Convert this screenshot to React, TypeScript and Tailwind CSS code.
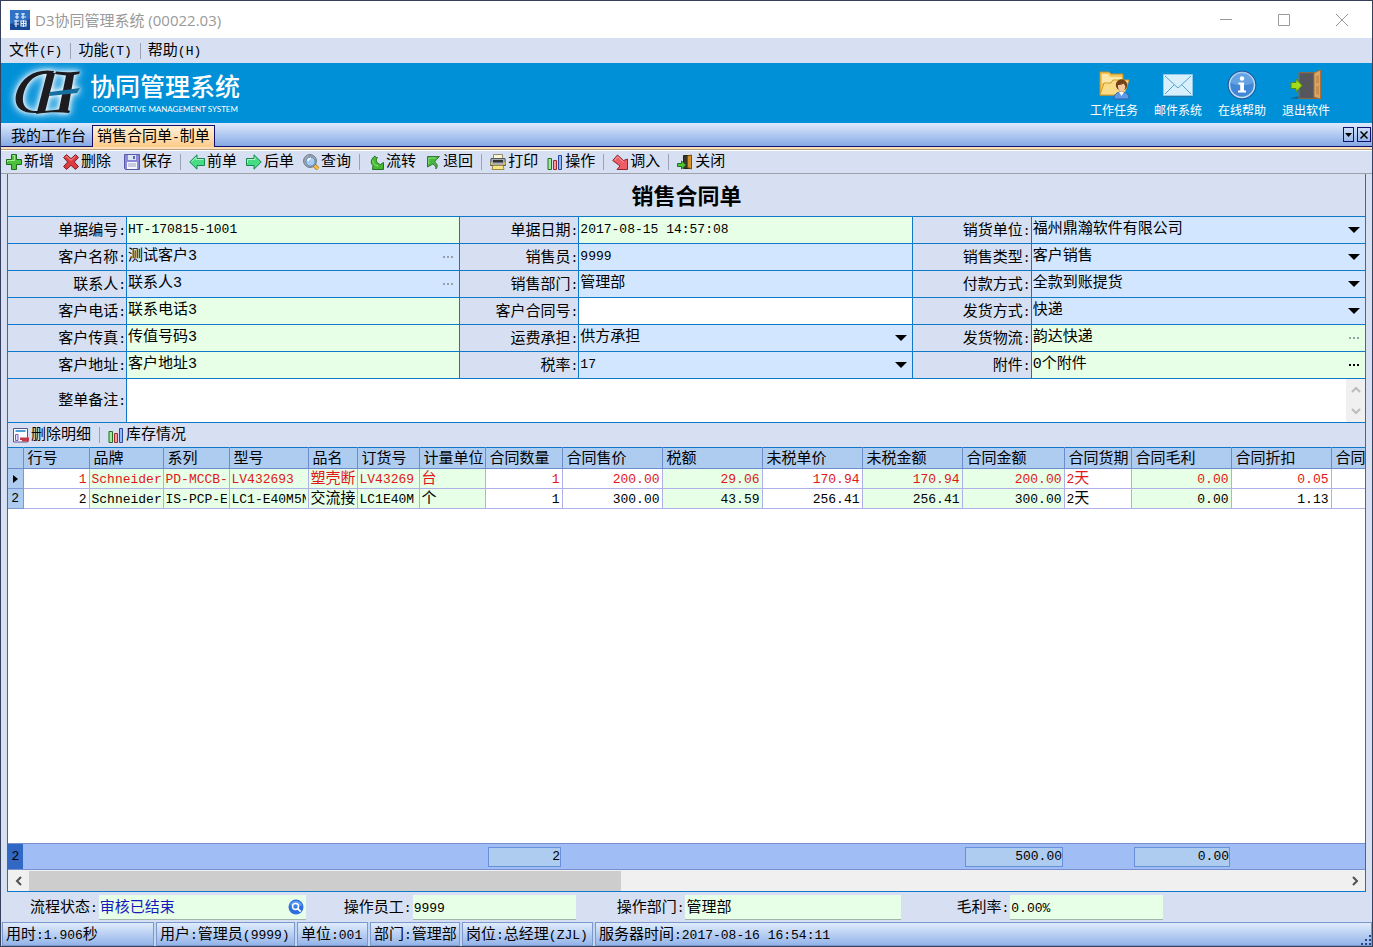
import React from 'react';

const FONT = "font-['Liberation_Mono','Noto_Sans_CJK_SC',monospace]";

/* Mixed text: half-width runs are set smaller so they keep about half the width of a Chinese character. */
function Mixed({ children }: { children: string }) {
  return (
    <>
      {children.split(/([\x20-\x7e]+)/).map((part, i) =>
        i % 2 ? (
          <span key={i} className="whitespace-pre text-[13px]">{part}</span>
        ) : (
          part
        ),
      )}
    </>
  );
}

/* ---------- icons ---------- */

const svg16 = { width: 16, height: 16, viewBox: '0 0 16 16', 'aria-hidden': true, className: 'shrink-0' } as const;

const AddIcon = () => (
  <svg {...svg16}>
    <path d="M5.5 0.5h5v5h5v5h-5v5h-5v-5h-5v-5h5z" fill="#4cc23c" stroke="#1d6b1d" />
    <path d="M6.5 1.5h2v5h-7v1.500" fill="none" stroke="#a5ee94" />
  </svg>
);
const DeleteIcon = () => (
  <svg {...svg16}>
    <path d="M3.500 .6L8 4.700 12.500 .6 15.400 3.500 11.300 8l4.100 4.500-2.900 2.900L8 11.300l-4.500 4.100L.6 12.500 4.700 8 .6 3.500z" fill="#dc3c41" stroke="#7c1a1f" />
    <path d="M2.200 3.600l1.400-1.400L8 6.300l4.400-4.100" fill="none" stroke="#f59a98" />
  </svg>
);
const SaveIcon = () => (
  <svg {...svg16}>
    <path d="M.5.5h15v15H1.500l-1-1z" fill="#8c8ad6" stroke="#5a58a8" />
    <path d="M4 1h8v5H4z" fill="#d8e6f4" />
    <path d="M9 2h2v3H9z" fill="#6462b4" />
    <path d="M3 8h10v7H3z" fill="#f4f6fb" />
    <path d="M4 10h8M4 12h8" stroke="#a0a0c4" />
  </svg>
);
const PrevIcon = () => (
  <svg {...svg16}>
    <path d="M.7 8L8 .8V4.500h7.500v7H8v3.700z" fill="#45dc84" stroke="#1a8550" />
    <path d="M2.500 7.800L7 3.300V5.500h7.500" fill="none" stroke="#aef5c6" />
  </svg>
);
const NextIcon = () => (
  <svg {...svg16}>
    <path d="M15.300 8L8 .8V4.500H.5v7H8v3.700z" fill="#45dc84" stroke="#1a8550" />
    <path d="M1.500 9V5.500H9V3.300" fill="none" stroke="#aef5c6" />
  </svg>
);
const SearchIcon = () => (
  <svg {...svg16}>
    <path d="M11 11l4 4" stroke="#a86e20" strokeWidth="4" />
    <path d="M11 11l4 4" stroke="#f8c23c" strokeWidth="2.500" />
    <circle cx="7" cy="7" r="6.400" fill="#a8adb6" stroke="#6b7078" />
    <circle cx="7.500" cy="7.500" r="4.600" fill="#a6cdf2" stroke="#5b86b4" />
    <path d="M4.800 7a3 3 0 013-2.500" fill="none" stroke="#fff" strokeWidth="1.400" />
  </svg>
);
const ForwardIcon = () => (
  <svg {...svg16}>
    <path d="M7 2C3 4.500 2 9 5 11.500L4.500 15.500h11V8.500l-3 2C9 9.500 7 6.500 9.500 3.500 8 4 7.500 3 7 2z" fill="#46b834" stroke="#247020" />
    <path d="M5 6.500c-.5 2.500 1.500 5 5.200 5.500" fill="none" stroke="#9be88a" />
  </svg>
);
const BackIcon = () => (
  <svg {...svg16}>
    <path d="M2.500 2.500h12L11.500 5.500 9.500 8c3 1.500 3.500 4.500 1.500 7-.2-2.500-1-4-3.200-5L2.500 13z" fill="#48b83a" stroke="#38743a" />
    <path d="M3.800 10V4h7" fill="none" stroke="#93dd86" />
  </svg>
);
const PrintIcon = () => (
  <svg {...svg16}>
    <path d="M3.500.5h9v4h-9z" fill="#fdf6d0" stroke="#8e8a70" />
    <path d="M1 4.500h14l.5 7H.5z" fill="#a9adb2" stroke="#54585e" />
    <path d="M3 6h10v2.500H3z" fill="#2e3238" />
    <path d="M3 11.500h10l1 4H2z" fill="#f8e488" stroke="#9c8838" />
    <path d="M.5 9.500h2M13.500 9.500h2" stroke="#f0c830" strokeWidth="2" />
  </svg>
);
const BarsIcon = () => (
  <svg {...svg16}>
    <path d="M1 4.500h3.500v11H1z" fill="#9fe89c" stroke="#246b24" />
    <path d="M6.500 6.500h3v9h-3z" fill="#f89a9c" stroke="#a02830" />
    <path d="M11.500 1.500h3v14h-3z" fill="#94baf8" stroke="#2848a0" />
  </svg>
);
const ImportIcon = () => (
  <svg {...svg16}>
    <path d="M5.500 1l6 5.500L15.500 5v10.500H5L8 12 .7 6.500z" fill="#ee5c64" stroke="#8c2830" />
    <path d="M2.500 6.200l3.200-3.400L11.500 8" fill="none" stroke="#f8a8a8" />
  </svg>
);
const ExitIcon = () => (
  <svg {...svg16}>
    <path d="M6.500 1.500h8v13h-8z" fill="#3a3428" stroke="#28241c" />
    <path d="M10.500 2l4-1v14l-4-1.500z" fill="#d8942c" stroke="#7e5010" />
    <path d="M.5 9.500h4v-2.500l4.500 4-4.500 4v-2.500h-4z" fill="#4cc83c" stroke="#1f741c" />
  </svg>
);
const RemoveRowIcon = () => (
  <svg {...svg16}>
    <path d="M.5 1.500h14v13.500H.5z" fill="#fdfdff" stroke="#56528c" />
    <path d="M2.500 4h10" stroke="#4ca0d4" strokeWidth="2" />
    <path d="M2.500 7.500h2.500v6H2.500z" fill="#e4e0ff" stroke="#7a5cc0" />
    <path d="M7 10.500h9v4H9v-1.500H7z" fill="#c23c48" />
  </svg>
);

const svg30 = { width: 32, height: 32, viewBox: '0 0 32 32', 'aria-hidden': true } as const;

const TaskIcon = () => (
  <svg {...svg30}>
    <path d="M2 3h9l2 2h12v21H2z" fill="#f3c55a" stroke="#c98f1e" />
    <path d="M4 5h6l2 3h12v6H4z" fill="#fbe7a8" />
    <path d="M2 26l4-12h7l2-3h16l-5 15z" fill="#fbdc86" stroke="#d19a2a" />
    <path d="M16 30c0-5 3-7 7.500-7s7.500 2 7.500 7z" fill="#5e9be6" stroke="#2c62ae" />
    <path d="M21 23l2.500 4 2.500-4z" fill="#fff" />
    <circle cx="23.500" cy="16" r="5.700" fill="#744018" />
    <path d="M20 16c2 0 4-.5 5.500-1.500l1.800 2.500c0 3-1.500 5.500-3.600 5.500s-3.700-2.500-3.700-5z" fill="#f6c9a0" />
  </svg>
);
const MailIcon = () => (
  <svg {...svg30}>
    <path d="M1.500 5.500h29v21h-29z" fill="#d8f0fc" stroke="#8fc8e8" />
    <path d="M2 27.500h28" stroke="#2b74a6" />
    <path d="M3 7l13 12L29 7M3 25l9-9M29 25l-9-9" fill="none" stroke="#5aa0c8" />
  </svg>
);
const InfoIcon = () => (
  <svg {...svg30}>
    <circle cx="16" cy="16" r="14" fill="#2a6cc0" stroke="#235794" />
    <circle cx="16" cy="16" r="12.500" fill="#4287d6" stroke="#c4e0f8" strokeWidth="1.500" />
    <path d="M5 14a11 11 0 0122 0c-6 3-16 3-22 0z" fill="#7db4ea" opacity=".6" />
    <circle cx="16" cy="9.500" r="2.200" fill="#fff" />
    <path d="M12.500 13.500h5.500v8h2v2h-8v-2h2.200v-6h-1.700z" fill="#fff" />
  </svg>
);
const DoorIcon = () => (
  <svg {...svg30}>
    <path d="M1 29l8-2h20v3H1z" fill="#0a6ba4" />
    <path d="M9 3.500h18v26H9z" fill="#5c5c60" stroke="#8a6a40" />
    <path d="M10 5h13v24H10z" fill="#55575c" />
    <path d="M24 4l6.500-3v29L24 28z" fill="#d9a868" stroke="#a87038" />
    <path d="M26 7l3-1v8l-3 .5zM26 17l3-.5V26l-3-1z" fill="#c89050" />
    <path d="M1 13.500h5v-3.500L12 16.500 6 23v-3.500H1z" fill="#a4dc1c" stroke="#548c0c" />
  </svg>
);

const Logo = () => (
  <svg width="84" height="56" viewBox="4 65 84 56" aria-hidden="true" className="[filter:drop-shadow(0_0_2px_white)_drop-shadow(0_0_4px_white)]">
    <path d="M54 71C36 68 22 77 17 91c-5 15 3 23 21 22l1-2C27 112 20 106 24 92c4-13 14-20 29-18z" fill="#1c1c20" />
    <path d="M47 73h8L45 112h-8z" fill="#1c1c20" />
    <path d="M56 71.500c8 1 15 1 24 0l-1 2.500-5 1-6 35 2 1-1 2c-11-1-21-1-33 1l1-2.500c10-1 17-1 22-2l7-34-11-1.500z" fill="#1c1c20" />
    <path d="M50 92l30-4-3 5c-8 1-18 2-28 3z" fill="#156f9f" />
  </svg>
);

const Chevron = ({ d }: { d: string }) => (
  <svg width="10" height="10" viewBox="0 0 10 10" aria-hidden="true">
    <path d={d} fill="none" stroke="currentColor" strokeWidth="2" />
  </svg>
);

/* ---------- data ---------- */

type Tool = [string, () => React.JSX.Element];

const toolGroups: Tool[][] = [
  [['保存', SaveIcon]],
  [['前单', PrevIcon], ['后单', NextIcon], ['查询', SearchIcon]],
  [['流转', ForwardIcon], ['退回', BackIcon]],
  [['打印', PrintIcon], ['操作', BarsIcon]],
  [['调入', ImportIcon]],
  [['关闭', ExitIcon]],
];

const shortcuts: Tool[] = [
  ['工作任务', TaskIcon],
  ['邮件系统', MailIcon],
  ['在线帮助', InfoIcon],
  ['退出软件', DoorIcon],
];

type Field = { label: string; value: string; tone: 'green' | 'blue' | 'white'; kind?: 'select' | 'lookup'; active?: boolean };

const fieldColumns: Field[][] = [
  [
    { label: '单据编号', value: 'HT-170815-1001', tone: 'green' },
    { label: '客户名称', value: '测试客户3', tone: 'blue', kind: 'lookup' },
    { label: '联系人', value: '联系人3', tone: 'blue', kind: 'lookup' },
    { label: '客户电话', value: '联系电话3', tone: 'green' },
    { label: '客户传真', value: '传值号码3', tone: 'green' },
    { label: '客户地址', value: '客户地址3', tone: 'green' },
  ],
  [
    { label: '单据日期', value: '2017-08-15 14:57:08', tone: 'green' },
    { label: '销售员', value: '9999', tone: 'blue' },
    { label: '销售部门', value: '管理部', tone: 'blue' },
    { label: '客户合同号', value: '', tone: 'white' },
    { label: '运费承担', value: '供方承担', tone: 'blue', kind: 'select' },
    { label: '税率', value: '17', tone: 'blue', kind: 'select' },
  ],
  [
    { label: '销货单位', value: '福州鼎瀚软件有限公司', tone: 'blue', kind: 'select' },
    { label: '销售类型', value: '客户销售', tone: 'blue', kind: 'select' },
    { label: '付款方式', value: '全款到账提货', tone: 'blue', kind: 'select' },
    { label: '发货方式', value: '快递', tone: 'blue', kind: 'select' },
    { label: '发货物流', value: '韵达快递', tone: 'green', kind: 'lookup' },
    { label: '附件', value: '0个附件', tone: 'green', kind: 'lookup', active: true },
  ],
];

const tones = { green: 'bg-[#e6ffe6]', blue: 'bg-[#d2e6ff]', white: 'bg-white' };

type Column = { name: string; col: string; green?: boolean; right?: boolean; sum?: string };

const columns: Column[] = [
  { name: '行号', col: 'w-[66px]', right: true },
  { name: '品牌', col: 'w-[74px]', green: true },
  { name: '系列', col: 'w-[66px]', green: true },
  { name: '型号', col: 'w-[79px]', green: true },
  { name: '品名', col: 'w-[49px]', green: true },
  { name: '订货号', col: 'w-[62px]', green: true },
  { name: '计量单位', col: 'w-[66px]', green: true },
  { name: '合同数量', col: 'w-[77px]', right: true, sum: '2' },
  { name: '合同售价', col: 'w-[100px]', right: true },
  { name: '税额', col: 'w-[100px]', right: true, green: true },
  { name: '未税单价', col: 'w-[100px]', right: true },
  { name: '未税金额', col: 'w-[100px]', right: true, green: true },
  { name: '合同金额', col: 'w-[102px]', right: true, green: true, sum: '500.00' },
  { name: '合同货期', col: 'w-[67px]' },
  { name: '合同毛利', col: 'w-[100px]', right: true, green: true, sum: '0.00' },
  { name: '合同折扣', col: 'w-[100px]', right: true },
  { name: '合同', col: '' },
];

const rows = [
  ['1', 'Schneider', 'PD-MCCB-', 'LV432693', '塑壳断', 'LV43269', '台', '1', '200.00', '29.06', '170.94', '170.94', '200.00', '2天', '0.00', '0.05', ''],
  ['2', 'Schneider', 'IS-PCP-E', 'LC1-E40M5N', '交流接', 'LC1E40M', '个', '1', '300.00', '43.59', '256.41', '256.41', '300.00', '2天', '0.00', '1.13', ''],
];

const statusCells: [string, string][] = [
  ['用时:1.906秒', 'w-[152px]'],
  ['用户:管理员(9999)', 'w-[139px]'],
  ['单位:001', 'w-[71px]'],
  ['部门:管理部', 'w-[90px]'],
  ['岗位:总经理(ZJL)', 'w-[131px]'],
  ['服务器时间:2017-08-16 16:54:11', 'flex-1'],
];

/* ---------- parts ---------- */

function ToolButton({ tool: [name, Icon] }: { tool: Tool }) {
  return (
    <button type="button" className="flex shrink-0 items-center gap-0.5 whitespace-nowrap">
      <Icon />
      <span className="pt-0.5">{name}</span>
    </button>
  );
}

const Divider = () => <span className="mx-2 h-4 w-px shrink-0 bg-[#9aa3b4]" />;

function FieldRow({ field, id }: { field: Field; id: string }) {
  const { label, value, tone, kind, active } = field;
  const size = /[^\x20-\x7e]/.test(value) ? 'text-[15px]' : 'text-[13px]';
  return (
    <div className="flex h-[27px] border-b border-[#0f78c8]">
      <label htmlFor={id} className="flex w-[119px] shrink-0 items-center justify-end border-r border-[#0f78c8] pt-[3px]">
        <Mixed>{label + ':'}</Mixed>
      </label>
      <div className={`relative flex min-w-0 flex-1 ${tones[tone]}`}>
        {kind === 'select' ? (
          <>
            <select id={id} defaultValue={value} className={`min-w-0 flex-1 appearance-none bg-transparent pl-px outline-none ${size}`}>
              <option>{value}</option>
            </select>
            <svg width="12" height="6" viewBox="0 0 12 6" aria-hidden="true" className="pointer-events-none absolute right-[5px] top-[10px]">
              <path d="M0 0h12L6 6z" fill="#000" />
            </svg>
          </>
        ) : (
          <input id={id} defaultValue={value} className={`min-w-0 flex-1 bg-transparent pl-px outline-none ${size}`} />
        )}
        {kind === 'lookup' && (
          <button type="button" aria-label={`选择${label}`} className={`flex w-[22px] items-center justify-center ${active ? 'text-black' : 'text-[#98a0ac]'}`}>
            <svg width="12" height="2" viewBox="0 0 12 2" aria-hidden="true">
              <path d="M1 0h2v2H1zM5 0h2v2H5zM9 0h2v2H9z" fill="currentColor" />
            </svg>
          </button>
        )}
      </div>
    </div>
  );
}

function ColumnWidths() {
  return (
    <colgroup>
      <col className="w-[15px]" />
      {columns.map((c) => (
        <col key={c.name} className={c.col} />
      ))}
    </colgroup>
  );
}

function BottomField({ id, label, value, width, icon, className = '' }: { id: string; label: string; value: string; width: string; icon?: boolean; className?: string }) {
  const size = /[^\x20-\x7e]/.test(value) ? 'text-[15px]' : 'text-[13px]';
  return (
    <div className="flex items-center gap-px">
      <label htmlFor={id} className="whitespace-nowrap pt-[3px]"><Mixed>{label + ':'}</Mixed></label>
      <div className={`flex h-[25px] items-center border-b border-[#a3b4ac] bg-[#e6ffe6] ${width}`}>
        <input id={id} defaultValue={value} className={`min-w-0 flex-1 bg-transparent pl-px pt-[3px] outline-none ${size} ${className}`} />
        {icon && (
          <button type="button" aria-label="查看流程" className="mr-0.5">
            <svg width="16" height="16" viewBox="0 0 16 16" aria-hidden="true">
              <circle cx="8" cy="8" r="7.500" fill="#2d6fe0" />
              <path d="M2 6a6.500 6.500 0 0112 0c-3 2-9 2-12 0z" fill="#7db0f6" opacity=".7" />
              <circle cx="7.500" cy="7.500" r="3" fill="#3d80ec" stroke="#fff" strokeWidth="1.500" />
              <path d="M9.700 9.700l3 3" stroke="#fff" strokeWidth="1.800" />
            </svg>
          </button>
        )}
      </div>
    </div>
  );
}

export default function App() {
  return (
    <div className={`flex min-h-screen flex-col border border-[#34405c] bg-[#d6e0f2] text-[15px] leading-5 text-black ${FONT}`}>
      <header className="flex h-[37px] shrink-0 items-center bg-white pl-[9px] font-['Open_Sans','Noto_Sans_CJK_SC',sans-serif] text-[#999]">
        <svg width="20" height="20" viewBox="0 0 20 20" aria-hidden="true">
          <path d="M0 0h20v20H0z" fill="#174a96" />
          <path d="M0 0h20v9L0 14z" fill="#3272c4" />
          <path d="M5 4h4M7 3v6M5 7h4M11 4h4M13 3v6M11 7h5M4 11h5M6 10v7M4 14h5M11 11h5v5h-5zM11 13.500h5M13.500 10v7" fill="none" stroke="#e4f0ff" strokeWidth="1.200" />
        </svg>
        <h1 className="flex-1 pl-[5px]">D3协同管理系统 (00022.03)</h1>
        <div className="flex items-center gap-[46px] pr-6">
          <button type="button" aria-label="最小化" className="h-3 w-3">
            <svg width="12" height="12" viewBox="0 0 12 12" aria-hidden="true"><path d="M0 5.500h12" stroke="#999" /></svg>
          </button>
          <button type="button" aria-label="最大化" className="h-3 w-3">
            <svg width="12" height="12" viewBox="0 0 12 12" aria-hidden="true"><path d="M.5.5h11v11H.5z" fill="none" stroke="#999" /></svg>
          </button>
          <button type="button" aria-label="关闭窗口" className="h-3 w-3">
            <svg width="12" height="12" viewBox="0 0 12 12" aria-hidden="true"><path d="M0 0l12 12M12 0L0 12" stroke="#999" /></svg>
          </button>
        </div>
      </header>

      <nav className="flex h-[25px] shrink-0 items-center pl-2">
        {['文件(F)', '功能(T)', '帮助(H)'].map((m, i) => (
          <React.Fragment key={m}>
            {i > 0 && <span className="ml-2 mr-[7px] h-4 w-px bg-[#9aa3b4]" />}
            <button type="button" className="whitespace-nowrap pt-[3px]"><Mixed>{m}</Mixed></button>
          </React.Fragment>
        ))}
      </nav>

      <div className="flex h-[60px] shrink-0 items-center justify-between bg-[#0090d8] pr-[38px] text-white">
        <div className="flex items-center pl-[3px] font-['Open_Sans','Noto_Sans_CJK_SC',sans-serif]">
          <Logo />
          <div className="pl-0.5 pt-0.5">
            <div className="text-[25px] font-medium leading-[30px]">协同管理系统</div>
            <div className="pl-0.5 font-['Lato',sans-serif] text-[8px] leading-4">COOPERATIVE MANAGEMENT SYSTEM</div>
          </div>
        </div>
        <div className="flex gap-2">
          {shortcuts.map(([name, Icon]) => (
            <button key={name} type="button" className="flex w-14 flex-col items-center gap-0.5 pt-1 text-[12px] leading-[18px]">
              <Icon />
              {name}
            </button>
          ))}
        </div>
      </div>

      <div className="flex h-6 shrink-0 items-end border-b border-[#10106c] bg-linear-to-b from-[#dfeafc] to-[#86a9e4]">
        <button type="button" className="h-[21px] whitespace-nowrap pl-2.5 pr-1.5 pt-[3px]">我的工作台</button>
        <button type="button" className="relative top-px h-[22px] whitespace-nowrap border border-b-0 border-[#10106c] bg-linear-to-b from-[#fff0d8] to-[#fdcb88] px-1 pt-[3px] leading-[18px]">
          <Mixed>销售合同单-制单</Mixed>
        </button>
        <div className="flex flex-1 justify-end gap-[3px] self-center pr-px">
          <button type="button" aria-label="标签列表" className="flex h-[15px] w-[11px] items-center justify-center border border-[#10106c]">
            <svg width="7" height="4" viewBox="0 0 7 4" aria-hidden="true"><path d="M0 0h7L3.500 4z" /></svg>
          </button>
          <button type="button" aria-label="关闭标签" className="flex h-[15px] w-[14px] items-center justify-center border border-[#10106c]">
            <svg width="8" height="8" viewBox="0 0 8 8" aria-hidden="true"><path d="M.5.5l7 7M7.500.5l-7 7" stroke="#000" strokeWidth="1.500" /></svg>
          </button>
        </div>
      </div>
      <div className="h-[3px] shrink-0 border-b border-[#b89c80] bg-[#fde0b8]" />

      <div className="flex h-6 shrink-0 items-center overflow-hidden border-b border-[#a0a0a8] border-t border-t-white pl-[5px]">
        <div className="mr-[13px] flex gap-[9px]">
          <ToolButton tool={['新增', AddIcon]} />
          <ToolButton tool={['删除', DeleteIcon]} />
        </div>
        {toolGroups.map((group, i) => (
          <React.Fragment key={i}>
            {i > 0 && <Divider />}
            <div className="flex gap-[9px]">
              {group.map((t) => (
                <ToolButton key={t[0]} tool={t} />
              ))}
            </div>
          </React.Fragment>
        ))}
      </div>

      <main className="mx-1.5 flex flex-1 flex-col border border-t-0 border-[#0f78c8]">
        <h2 className="flex h-[43px] shrink-0 items-center justify-center border-b border-[#0f78c8] pt-2 text-[22px] font-bold">销售合同单</h2>
        <form className="shrink-0">
          <div className="grid grid-cols-3">
            {fieldColumns.map((fields, c) => (
              <div key={c} className={c < 2 ? 'border-r border-[#0f78c8]' : ''}>
                {fields.map((f, r) => (
                  <FieldRow key={f.label} field={f} id={`field-${c}-${r}`} />
                ))}
              </div>
            ))}
          </div>
          <div className="flex h-11 border-b border-[#0f78c8]">
            <label htmlFor="remark" className="flex w-[119px] shrink-0 items-center justify-end border-r border-[#0f78c8] pt-[3px]">
              <Mixed>整单备注:</Mixed>
            </label>
            <textarea id="remark" className="flex-1 resize-none bg-white outline-none" />
            <div className="flex w-[19px] flex-col items-center justify-between bg-[#f0f0f0] py-1.5 text-[#bcbcbc]">
              <Chevron d="M1 7l4-4 4 4" />
              <Chevron d="M1 3l4 4 4-4" />
            </div>
          </div>
        </form>

        <div className="flex h-6 shrink-0 items-center pl-[5px]">
          <ToolButton tool={['删除明细', RemoveRowIcon]} />
          <Divider />
          <ToolButton tool={['库存情况', BarsIcon]} />
        </div>

        <div className="flex-1 bg-white">
          <table className="w-full table-fixed border-collapse">
            <ColumnWidths />
            <thead>
              <tr className="h-[21px]">
                <th className="border-b border-r border-t border-[#6c8ccc] border-t-[#0f78c8] bg-[#aecbf0] p-0" />
                {columns.map((c) => (
                  <th key={c.name} className="overflow-hidden whitespace-nowrap border-b border-r border-t border-[#6c8ccc] border-t-[#0f78c8] bg-[#aecbf0] p-0 pl-1 pt-[3px] text-left font-normal leading-[17px] last:border-r-0">
                    {c.name}
                  </th>
                ))}
              </tr>
            </thead>
            <tbody>
              {rows.map((row, r) => (
                <tr key={r} className={`h-5 ${r === 0 ? 'text-[#e01818]' : 'text-black'}`}>
                  <td className="border-b border-r border-[#7c98d8] bg-[#aecbf0] p-0 text-center leading-[19px] text-black">
                    {r === 0 ? (
                      <svg width="5" height="8" viewBox="0 0 5 8" aria-hidden="true" className="mx-auto"><path d="M0 0l5 4-5 4z" /></svg>
                    ) : (
                      <Mixed>2</Mixed>
                    )}
                  </td>
                  {row.map((v, i) => (
                    <td
                      key={i}
                      className={`overflow-hidden whitespace-nowrap border-b border-r border-[#b0b0e8] p-0 px-0.5 last:border-r-0 ${columns[i].right ? 'text-right' : ''} ${columns[i].green ? 'bg-[#e6ffe6]' : ''}`}
                    >
                      <div className="overflow-hidden pt-0.5 leading-[17px]"><Mixed>{v}</Mixed></div>
                    </td>
                  ))}
                </tr>
              ))}
            </tbody>
          </table>
        </div>

        <div className="shrink-0 border-y border-[#7890d0] bg-[#a0bef5]">
          <table className="w-full table-fixed border-collapse">
            <ColumnWidths />
            <tbody>
              <tr className="h-[25px]">
                <td className="bg-[#3068c4] p-0 text-center"><Mixed>2</Mixed></td>
                {columns.map((c) => (
                  <td key={c.name} className="p-0 pl-[3px] pr-px">
                    {c.sum && <div className="h-5 border border-[#6890d8] bg-[#aecbf0] text-right leading-[18px]"><Mixed>{c.sum}</Mixed></div>}
                  </td>
                ))}
              </tr>
            </tbody>
          </table>
        </div>

        <div className="flex h-[21px] shrink-0 items-center bg-[#f0f0f0] text-[#505050]">
          <button type="button" aria-label="向左滚动" className="flex w-[21px] justify-center"><Chevron d="M7 1L3 5l4 4" /></button>
          <div className="flex h-5 flex-1"><div className="w-[45%] bg-[#cdcdcd]" /></div>
          <button type="button" aria-label="向右滚动" className="flex w-[21px] justify-center"><Chevron d="M3 1l4 4-4 4" /></button>
        </div>
      </main>

      <div className="flex h-[30px] shrink-0 items-center pl-[29px] pt-px">
        <BottomField id="flow" label="流程状态" value="审核已结束" width="mr-[38px] w-[207px]" icon className="text-[#1818c0]" />
        <BottomField id="staff" label="操作员工" value="9999" width="mr-[41px] w-[163px]" />
        <BottomField id="dept" label="操作部门" value="管理部" width="mr-[55px] w-[216px]" />
        <BottomField id="margin" label="毛利率" value="0.00%" width="w-[153px]" />
      </div>

      <footer className="relative flex h-6 shrink-0 gap-0.5 bg-[#c4d6f2] pl-px">
        {statusCells.map(([text, width]) => (
          <div key={text} className={`shrink-0 overflow-hidden whitespace-nowrap border border-[#7c98cc] bg-linear-to-b from-[#e0ecfc] to-[#94b4e8] pl-[3px] pt-[3px] ${width}`}>
            <Mixed>{text}</Mixed>
          </div>
        ))}
        <svg width="12" height="12" viewBox="0 0 12 12" aria-hidden="true" className="absolute bottom-0 right-0">
          <path d="M9 1h2v2H9zM9 5h2v2H9zM9 9h2v2H9zM5 5h2v2H5zM5 9h2v2H5zM1 9h2v2H1z" fill="#27478c" />
        </svg>
      </footer>
    </div>
  );
}
